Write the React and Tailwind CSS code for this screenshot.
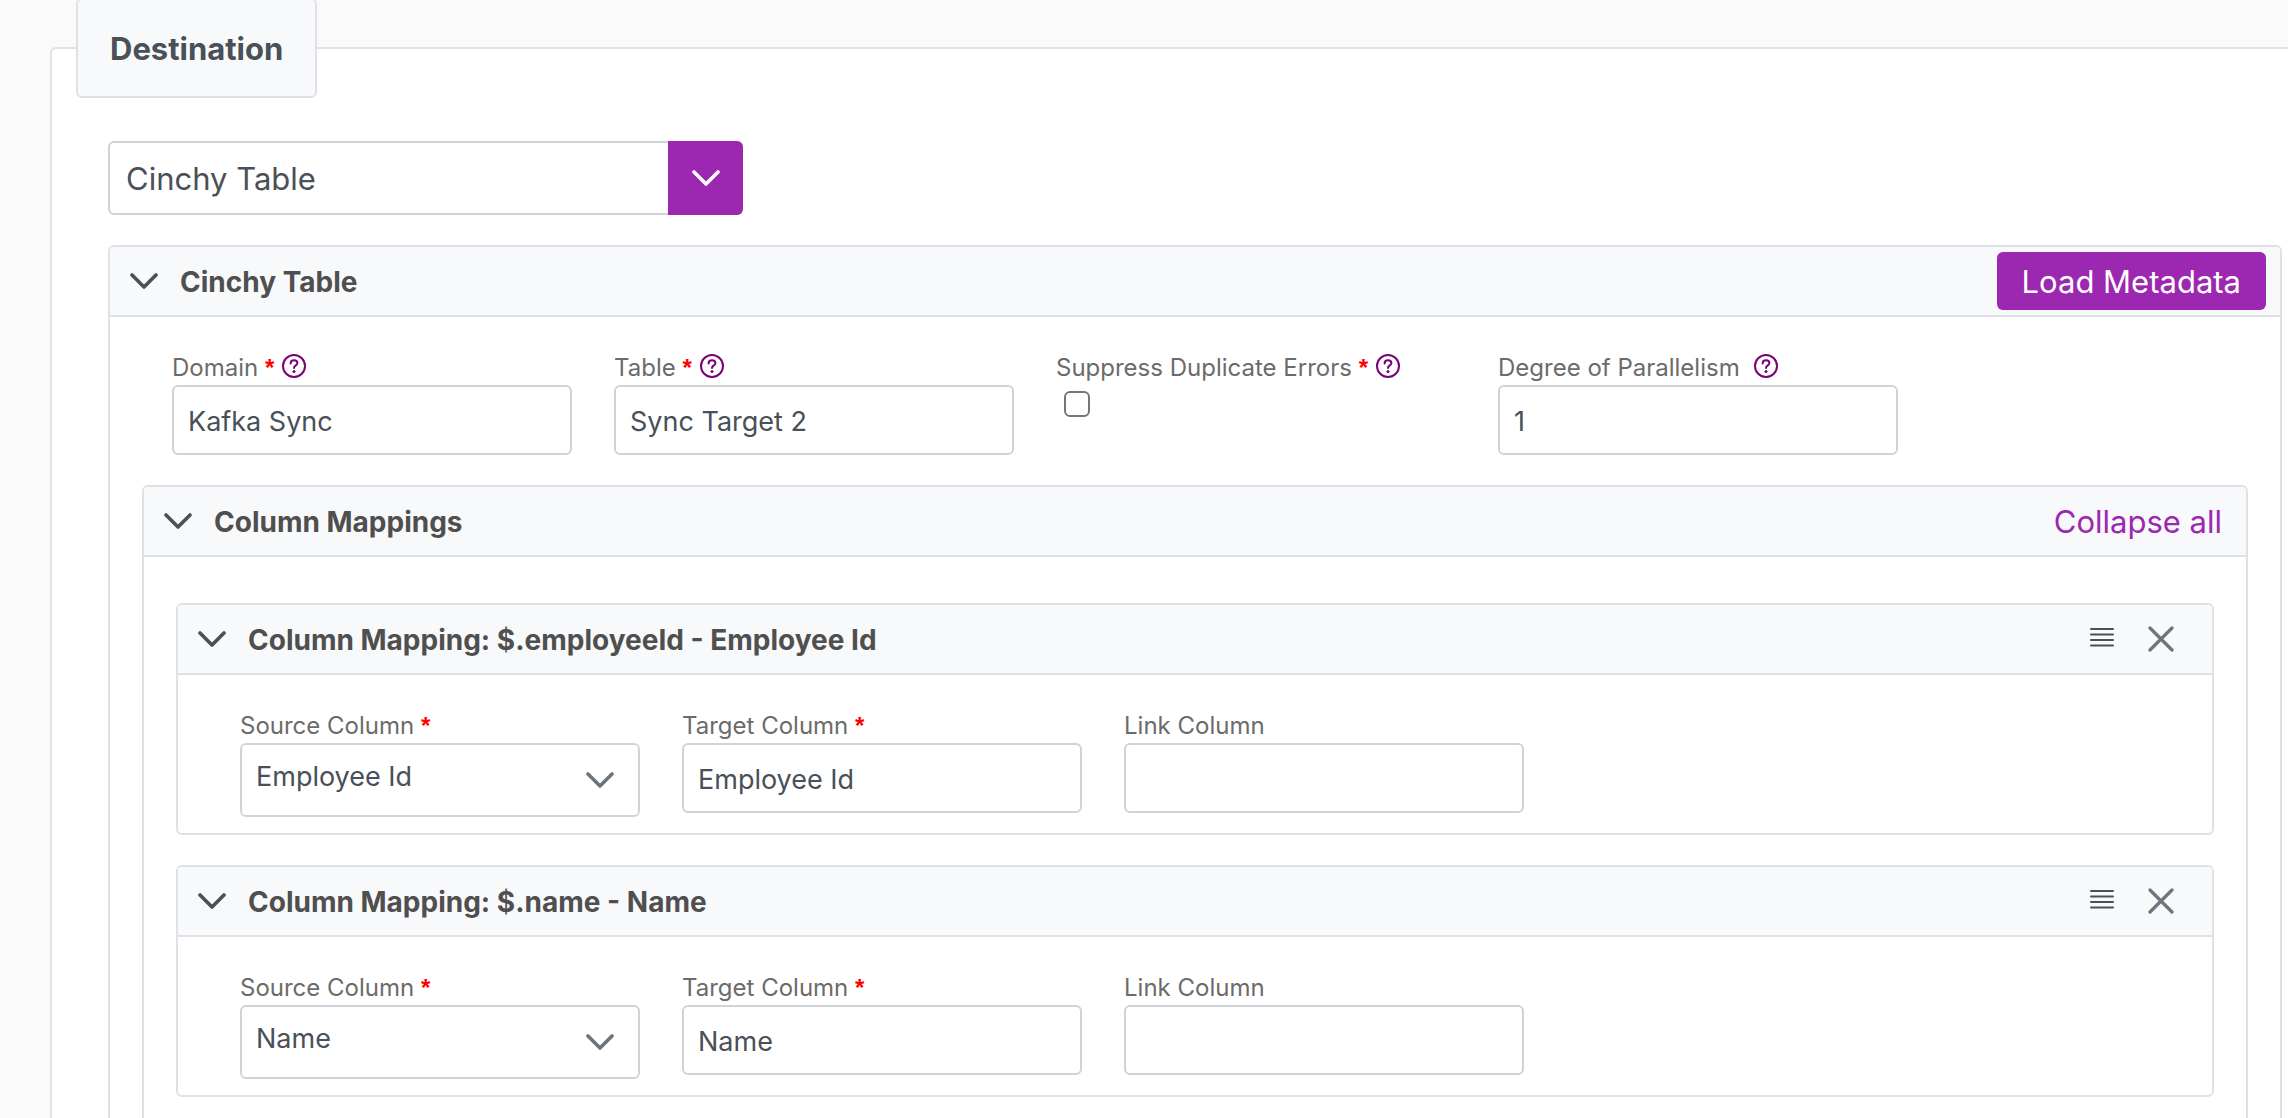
import React, { useState } from 'react'

const ChevronDown = ({ className }) => (
  <svg viewBox="0 0 28 16" fill="none" className={className} aria-hidden="true">
    <path d="M2 2L14 14L26 2" stroke="currentColor" strokeWidth="3.6" strokeLinecap="round" strokeLinejoin="round" />
  </svg>
)

const HelpIcon = () => (
  <svg viewBox="0 0 24 24" fill="none" className="h-6 w-6 shrink-0 text-[#7a007a]" aria-hidden="true">
    <circle cx="12" cy="12" r="11" stroke="currentColor" strokeWidth="2" />
    <path
      d="M8.6 9.4C8.6 7.3 10 6.2 12 6.2C14 6.2 15.4 7.4 15.4 9.2C15.4 11.5 12 11.4 12 14"
      stroke="currentColor"
      strokeWidth="2"
      strokeLinecap="round"
    />
    <circle cx="12" cy="17.4" r="1.5" fill="currentColor" />
  </svg>
)

const DragIcon = () => (
  <svg viewBox="0 0 24 20" fill="none" className="h-5 w-6" aria-hidden="true">
    <path d="M1 2H23M1 7.5H23M1 13H23M1 18.5H23" stroke="currentColor" strokeWidth="2" strokeLinecap="round" />
  </svg>
)

const CloseIcon = () => (
  <svg viewBox="0 0 26 26" fill="none" className="h-[26px] w-[26px]" aria-hidden="true">
    <path d="M2 2L24 24M24 2L2 24" stroke="currentColor" strokeWidth="3.2" strokeLinecap="round" />
  </svg>
)

const inputClass =
  'block w-full rounded-md border-2 border-[#ced4da] bg-white px-3.5 text-[27px] text-[#495057] focus:outline-none focus:border-[#9c27b0]'

// ------------------------------------------------------------
// Field: label row with the control under it
// ------------------------------------------------------------
function Field({ id, label, required, help, children }) {
  return (
    <div className="w-[400px]">
      <div className="flex h-9 items-center">
        <label htmlFor={id} className="whitespace-nowrap pt-0.5 text-2xl text-[#6b6b6b]">
          {label}{' '}
          {required && <span className="font-['Liberation_Sans',sans-serif] font-bold text-[#ff0000]">*</span>}
        </label>
        {help && (
          <button type="button" aria-label={`Help: ${label}`} className={required ? 'mb-0.5 ml-2' : 'mb-0.5 ml-3.5'}>
            <HelpIcon />
          </button>
        )}
      </div>
      {children}
    </div>
  )
}

function TextField({ id, defaultValue, ...rest }) {
  return (
    <Field id={id} {...rest}>
      <input id={id} type="text" defaultValue={defaultValue} className={`${inputClass} h-[70px] pt-0.5`} />
    </Field>
  )
}

function SelectField({ id, options, defaultValue, ...rest }) {
  return (
    <Field id={id} {...rest}>
      <div className="relative">
        <select id={id} defaultValue={defaultValue} className={`${inputClass} h-[74px] appearance-none pb-1.5`}>
          {options.map((o) => (
            <option key={o}>{o}</option>
          ))}
        </select>
        <ChevronDown className="pointer-events-none absolute right-[26px] top-[29px] h-4 w-7 text-[#6c757d]" />
      </div>
    </Field>
  )
}

// ------------------------------------------------------------
// Panel: collapsible card with a grey header
// ------------------------------------------------------------
function Panel({ title, actions, children }) {
  const [open, setOpen] = useState(true)
  return (
    <section className="rounded-md border-2 border-[#dee2e6] bg-white">
      <header className="flex h-[70px] items-center justify-between rounded-t border-b-2 border-[#dee2e6] bg-[#f8f9fb]">
        <button
          type="button"
          aria-expanded={open}
          onClick={() => setOpen(!open)}
          className="flex items-center gap-[22px] pl-5 text-[28px] font-bold text-[#4f4f4f]"
        >
          <ChevronDown className="h-4 w-7 text-[#495057]" />
          <span className="pt-0.5">{title}</span>
        </button>
        {actions}
      </header>
      {open && children}
    </section>
  )
}

const sourceColumns = ['Employee Id', 'Name']

function ColumnMapping({ id, source, target, name, onRemove }) {
  return (
    <Panel
      title={`Column Mapping: ${source} - ${name}`}
      actions={
        <div className="flex items-center gap-[34px] pr-[38px] text-[#495057]">
          <button type="button" aria-label="Reorder" className="pb-1">
            <DragIcon />
          </button>
          <button type="button" aria-label="Remove" onClick={onRemove} className="text-[#6c757d]">
            <CloseIcon />
          </button>
        </div>
      }
    >
      <div className="flex flex-wrap gap-x-[42px] px-[62px] pb-4 pt-8">
        <SelectField id={`${id}-source`} label="Source Column" required options={sourceColumns} defaultValue={name} />
        <TextField id={`${id}-target`} label="Target Column" required defaultValue={target} />
        <TextField id={`${id}-link`} label="Link Column" />
      </div>
    </Panel>
  )
}

export default function App() {
  const [mappings, setMappings] = useState([
    { id: 'employee-id', source: '$.employeeId', name: 'Employee Id', target: 'Employee Id' },
    { id: 'name', source: '$.name', name: 'Name', target: 'Name' },
  ])

  const removeMapping = (id) => setMappings(mappings.filter((m) => m.id !== id))

  return (
    <div className="h-screen overflow-hidden bg-[#fafafa] pl-[50px] font-['Inter',sans-serif]">
      <fieldset className="-mt-0.5 min-h-screen rounded-tl-md border-l-2 border-t-2 border-[#dee2e6] bg-white pb-10 pl-14 pr-1.5">
        <legend className="-ml-8 rounded-md border-2 border-[#dee2e6] bg-[#f8f9fb] px-8 pb-[23px] pt-[25px] text-[31px] font-bold leading-[48px] text-[#495057]">
          Destination
        </legend>

        {/* Destination type */}
        <div className="relative mt-[43px] w-[635px]">
          <select
            aria-label="Destination type"
            className="block h-[74px] w-full appearance-none rounded-md border-2 border-[#ced4da] bg-white pl-4 pr-20 pt-0.5 text-[31px] text-[#495057]"
          >
            <option>Cinchy Table</option>
          </select>
          <span className="pointer-events-none absolute inset-y-0 right-0 flex w-[75px] items-center justify-center rounded-r-md bg-[#9c27b0]">
            <ChevronDown className="h-4 w-7 text-white" />
          </span>
        </div>

        <div className="mt-[30px]">
          <Panel
            title="Cinchy Table"
            actions={
              <button
                type="button"
                className="mr-3.5 h-[58px] rounded-md bg-[#9c27b0] px-[25px] pt-0.5 text-[31px] text-white"
              >
                Load Metadata
              </button>
            }
          >
            <div className="px-8 pb-8 pt-8">
              <div className="flex flex-wrap gap-x-[42px] px-[30px]">
                <TextField id="domain" label="Domain" required help defaultValue="Kafka Sync" />
                <TextField id="table" label="Table" required help defaultValue="Sync Target 2" />
                <Field id="suppress" label="Suppress Duplicate Errors" required help>
                  <input
                    id="suppress"
                    type="checkbox"
                    className="ml-2 mt-1.5 block h-[26px] w-[26px] appearance-none rounded-md border-2 border-[#767676] bg-white checked:bg-[#9c27b0]"
                  />
                </Field>
                <TextField id="parallelism" label="Degree of Parallelism" help defaultValue="1" />
              </div>

              {/* Column mappings */}
              <div className="mt-[30px]">
                <Panel
                  title="Column Mappings"
                  actions={
                    <button type="button" className="pr-6 pt-0.5 text-[31px] text-[#9c27b0]">
                      Collapse all
                    </button>
                  }
                >
                  <div className="flex flex-col gap-[30px] px-8 pb-8 pt-[46px]">
                    {mappings.map((m) => (
                      <ColumnMapping key={m.id} {...m} onRemove={() => removeMapping(m.id)} />
                    ))}
                  </div>
                </Panel>
              </div>
            </div>
          </Panel>
        </div>
      </fieldset>
    </div>
  )
}
